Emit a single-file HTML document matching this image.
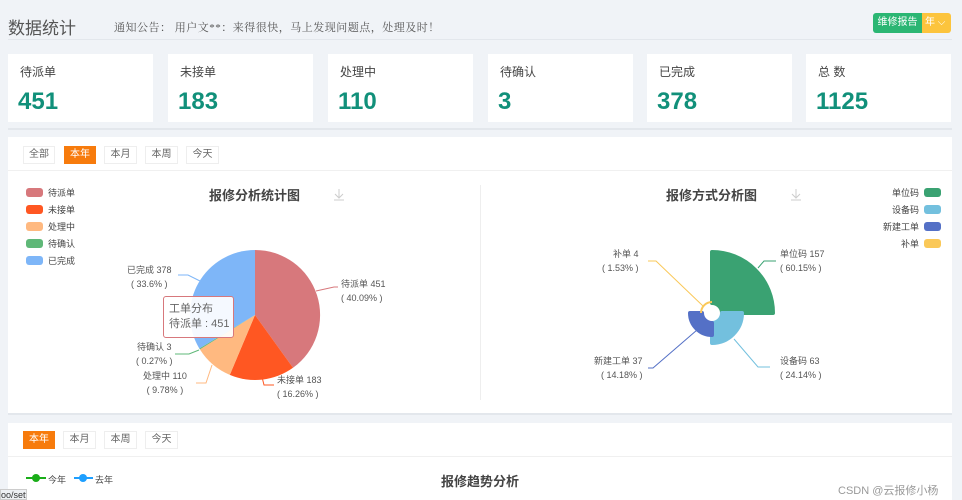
<!DOCTYPE html>
<html><head><meta charset="utf-8"><style>
*{margin:0;padding:0;box-sizing:border-box}
body{width:962px;height:500px;overflow:hidden;background:#f0f3f7;font-family:"Liberation Sans","Noto Sans CJK SC",sans-serif;position:relative;color:#333}
.a{position:absolute}
.card{position:absolute;top:54px;height:68px;background:#fff}
.card .t{position:absolute;left:12px;top:9px;font-size:12px;color:#444}
.card .n{position:absolute;left:10px;top:34px;font-size:24px;color:#11907a;font-weight:600}
.btn{position:absolute;height:18px;font-size:10px;line-height:16px;border:1px solid #eee;text-align:center;color:#666;background:#fff}
.on{background:#f77b0c;color:#fff;border-color:#f77b0c}
.lg{position:absolute;font-size:9px;color:#444;line-height:12px;white-space:nowrap}
.lg i{display:inline-block;width:17px;height:9px;border-radius:3px;vertical-align:-1px;margin-right:5px}
.lr i{margin:0 0 0 5px}
.lb{position:absolute;font-size:9px;color:#555;line-height:14px;white-space:nowrap}
</style></head><body>
<div class="a" style="left:8px;top:14px;font-size:17px;color:#555">数据统计</div>
<div class="a" style="left:114px;top:19px;font-size:11px;color:#555;font-family:'Liberation Serif','Noto Serif CJK SC',serif;letter-spacing:.5px">通知公告： 用户文**：来得很快，马上发现问题点，处理及时！</div>
<div class="a" style="left:873px;top:13px;width:49px;height:20px;background:#2bb673;border-radius:3px 0 0 3px;color:#fff;font-size:10px;line-height:20px;text-align:center">维修报告</div>
<div class="a" style="left:922px;top:13px;width:29px;height:20px;background:#fcc43d;border-radius:0 3px 3px 0;color:#fff;font-size:10px;line-height:20px;padding-left:3px">年 ⌵</div>
<div class="a" style="left:8px;top:39px;width:944px;height:1px;background:#e3e7ec"></div>
<div class="card" style="left:8px;width:145px"><div class="t">待派单</div><div class="n">451</div></div>
<div class="card" style="left:168px;width:145px"><div class="t">未接单</div><div class="n">183</div></div>
<div class="card" style="left:328px;width:145px"><div class="t">处理中</div><div class="n">110</div></div>
<div class="card" style="left:488px;width:145px"><div class="t">待确认</div><div class="n">3</div></div>
<div class="card" style="left:647px;width:145px"><div class="t">已完成</div><div class="n">378</div></div>
<div class="card" style="left:806px;width:145px"><div class="t">总 数</div><div class="n">1125</div></div>
<div class="a" style="left:8px;top:128px;width:944px;height:2px;background:#e3e7ec"></div>
<div class="a" style="left:8px;top:137px;width:944px;height:278px;background:#fff;border-bottom:2px solid #e3e7ec"></div>
<div class="a" style="left:8px;top:170px;width:944px;height:1px;background:#f0f0f0"></div>
<div class="btn" style="left:23px;top:146px;width:32px">全部</div>
<div class="btn on" style="left:64px;top:146px;width:32px">本年</div>
<div class="btn" style="left:104px;top:146px;width:33px">本月</div>
<div class="btn" style="left:145px;top:146px;width:33px">本周</div>
<div class="btn" style="left:186px;top:146px;width:33px">今天</div>
<div class="a" style="left:480px;top:185px;width:1px;height:215px;background:#eee"></div>
<div class="lg" style="left:26px;top:187px"><i style="background:#d7787c"></i>待派单</div>
<div class="lg" style="left:26px;top:204px"><i style="background:#ff5722"></i>未接单</div>
<div class="lg" style="left:26px;top:221px"><i style="background:#ffb980"></i>处理中</div>
<div class="lg" style="left:26px;top:238px"><i style="background:#5fb878"></i>待确认</div>
<div class="lg" style="left:26px;top:255px"><i style="background:#7eb6f8"></i>已完成</div>
<div class="a" style="left:209px;top:185px;font-size:13px;font-weight:bold;color:#444">报修分析统计图</div>
<div class="a" style="left:666px;top:185px;font-size:13px;font-weight:bold;color:#444">报修方式分析图</div>
<div class="lg lr" style="left:880px;top:187px;text-align:right;width:61px">单位码<i style="background:#3aa272"></i></div>
<div class="lg lr" style="left:880px;top:204px;text-align:right;width:61px">设备码<i style="background:#73c0de"></i></div>
<div class="lg lr" style="left:860px;top:221px;text-align:right;width:81px">新建工单<i style="background:#5470c6"></i></div>
<div class="lg lr" style="left:880px;top:238px;text-align:right;width:61px">补单<i style="background:#fac858"></i></div>
<svg class="a" style="left:0;top:0" width="962" height="500">
<g stroke="#ccc" fill="none" stroke-width="1"><path d="M339 189v8M335 194l4 4 4-4M334 200h10"/><path d="M796 189v8M792 194l4 4 4-4M791 200h10"/></g>
<path d="M255 315L255 250A65 65 0 0 1 293 367.8Z" fill="#d7787c"/>
<path d="M255 315L293 367.8A65 65 0 0 1 229.8 374.9Z" fill="#ff5722"/>
<path d="M255 315L229.8 374.9A65 65 0 0 1 199.9 349.4Z" fill="#ffb980"/>
<path d="M255 315L199.9 349.4A65 65 0 0 1 199.3 348.5Z" fill="#5fb878"/>
<path d="M255 315L199.3 348.5A65 65 0 0 1 255 250Z" fill="#7eb6f8"/>
<g fill="none" stroke-width="1">
<path d="M316 291l18-4h4" stroke="#d7787c"/>
<path d="M262 377l2 8h10" stroke="#ff5722"/>
<path d="M212 365l-6 18h-10" stroke="#ffb980"/>
<path d="M199 350l-10 4h-14" stroke="#5fb878"/>
<path d="M200 281l-12-6h-10" stroke="#7eb6f8"/>
<path d="M758 268l6-7h12" stroke="#3aa272"/>
<path d="M734 339l24 28h12" stroke="#73c0de"/>
<path d="M697 330l-44 38h-5" stroke="#5470c6"/>
<path d="M703 306l-47-45h-8" stroke="#fac858"/>
</g>
<g stroke-linejoin="round" stroke-width="4">
<path d="M712 303L712 252A61 61 0 0 1 773 313L722 313A10 10 0 0 0 712 303Z" fill="#3aa272" stroke="#3aa272"/>
<path d="M722 313L742 313A30 30 0 0 1 712 343L712 323A10 10 0 0 0 722 313Z" fill="#73c0de" stroke="#73c0de"/>
<path d="M712 323L712 335A22 22 0 0 1 690 313L702 313A10 10 0 0 0 712 323Z" fill="#5470c6" stroke="#5470c6"/>
</g>
<path d="M702 313A10 10 0 0 1 712 303L712 301A12 12 0 0 0 700 313Z" fill="#fac858"/>
</svg>
<div class="a" style="left:163px;top:296px;width:71px;height:42px;background:rgba(255,255,255,.92);border:1px solid #d7787c;border-radius:3px;font-size:11px;color:#666;padding:5px 5px;line-height:15px;white-space:nowrap">工单分布<br>待派单 : 451</div>
<div class="lb" style="left:341px;top:277px">待派单 451<br>( 40.09% )</div>
<div class="lb" style="left:277px;top:373px">未接单 183<br>( 16.26% )</div>
<div class="lb" style="left:143px;top:369px;text-align:center">处理中 110<br>( 9.78% )</div>
<div class="lb" style="left:136px;top:340px;text-align:center">待确认 3<br>( 0.27% )</div>
<div class="lb" style="left:127px;top:263px;text-align:center">已完成 378<br>( 33.6% )</div>
<div class="lb" style="left:780px;top:247px">单位码 157<br>( 60.15% )</div>
<div class="lb" style="left:780px;top:354px">设备码 63<br>( 24.14% )</div>
<div class="lb" style="left:594px;top:354px;text-align:right">新建工单 37<br>( 14.18% )</div>
<div class="lb" style="left:602px;top:247px;text-align:right">补单 4<br>( 1.53% )</div>
<div class="a" style="left:8px;top:423px;width:944px;height:77px;background:#fff"></div>
<div class="a" style="left:8px;top:456px;width:944px;height:1px;background:#f0f0f0"></div>
<div class="btn on" style="left:23px;top:431px;width:32px">本年</div>
<div class="btn" style="left:63px;top:431px;width:33px">本月</div>
<div class="btn" style="left:104px;top:431px;width:33px">本周</div>
<div class="btn" style="left:145px;top:431px;width:33px">今天</div>
<div class="a" style="left:441px;top:471px;font-size:13px;font-weight:bold;color:#444">报修趋势分析</div>
<svg class="a" style="left:26px;top:472px" width="70" height="12"><path d="M0 6h20" stroke="#1aad19" stroke-width="2"/><circle cx="10" cy="6" r="4" fill="#1aad19"/><path d="M48 6h19" stroke="#1e9fff" stroke-width="2"/><circle cx="57" cy="6" r="4" fill="#1e9fff"/></svg>
<div class="a" style="left:48px;top:473px;font-size:9px;color:#444">今年</div>
<div class="a" style="left:95px;top:473px;font-size:9px;color:#444">去年</div>
<div class="a" style="left:838px;top:482px;font-size:11px;color:#999">CSDN @云报修小杨</div>
<div class="a" style="left:0;top:489px;width:27px;height:11px;background:#eef0f3;border:1px solid #ccc;font-size:9px;color:#333;line-height:10px;overflow:hidden;white-space:nowrap">oo/setting</div>
</body></html>
